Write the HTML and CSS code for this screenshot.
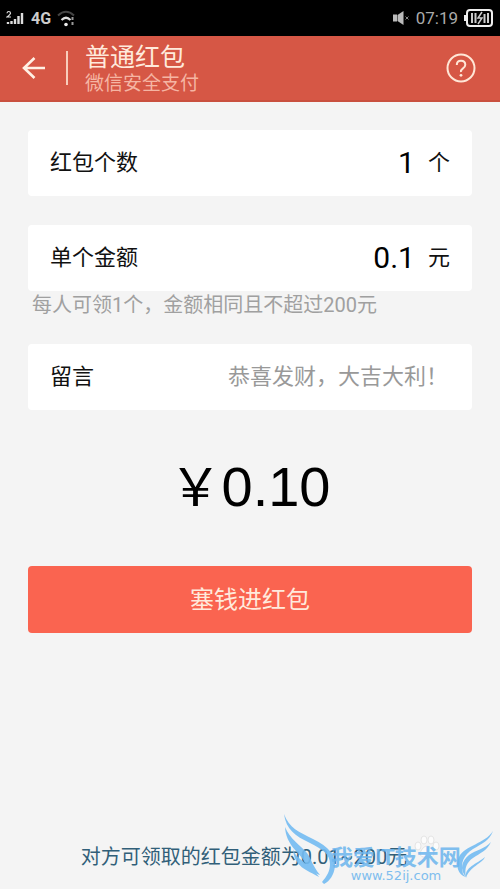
FILE: index.html
```html
<!DOCTYPE html>
<html lang="zh-CN">
<head>
<meta charset="utf-8">
<meta name="viewport" content="width=device-width, initial-scale=1">
<title>普通红包</title>
<link rel="stylesheet" href="styles.css">
</head>
<body>
<div class="status">
  <svg class="signal" viewBox="0 0 20 18" width="20" height="18" aria-hidden="true">
    <path d="M2 15v-2M5.500 15v-3M9 15v-5M12.500 15v-8M16 15V4" stroke="#ddd" stroke-width="2.400" fill="none"/>
    <path d="M1 4.200Q1.200 2.500 2.800 2.500T4.500 4.200Q4.400 5.400 1 8h4" stroke="#ddd" stroke-width="1.200" fill="none"/>
  </svg>
  <span class="net">4G</span>
  <svg class="wifi" viewBox="0 0 20 18" width="20" height="18" aria-hidden="true">
    <path d="M1 6.500Q9-1 17 6.500" stroke="#444" stroke-width="2" fill="none"/>
    <path d="M4.500 11Q9 6.500 13.500 11" stroke="#ddd" stroke-width="2.200" fill="none"/>
    <circle cx="9" cy="15.500" r="1.800" fill="#eee"/>
    <path d="M15.500 8v3M15.500 13v3" stroke="#999" stroke-width="2"/>
  </svg>
  <span class="grow"></span>
  <svg class="mute" viewBox="0 0 18 16" width="18" height="16" aria-hidden="true">
    <path d="M1 4.500h4v7H1zM5.500 5l6-4v14l-6-4z" fill="#bbb"/>
    <path d="M13.500 6.500l3 3M16.500 6.500l-3 3" stroke="#888"/>
  </svg>
  <time class="clock">07:19</time>
  <svg class="battery" viewBox="0 0 30 18" width="30" height="18" aria-hidden="true">
    <rect x="3" y="1" width="25" height="16" rx="3" fill="none" stroke="#eee" stroke-width="2"/>
    <path d="M1 6v6" stroke="#eee" stroke-width="2"/>
    <path d="M8 4v10M11.500 4v10M20.500 5v9M24 4v10" stroke="#ccc" stroke-width="2"/>
    <path d="M18 3l-4 6h4l-4 6" stroke="#ccc" stroke-width="1.500" fill="none"/>
  </svg>
</div>
<header class="bar">
  <button class="icon-btn" type="button" aria-label="返回">
    <svg viewBox="0 0 24 24" width="24" height="24"><path d="M23 12H2M12.500 2L2 12l10.500 10" fill="none" stroke="#fff0e4" stroke-width="2.600"/></svg>
  </button>
  <span class="divider"></span>
  <div class="titles">
    <h1>普通红包</h1>
    <p>微信安全支付</p>
  </div>
  <button class="icon-btn" type="button" aria-label="帮助">
    <svg viewBox="0 0 30 30" width="30" height="30"><circle cx="15" cy="15" r="13.500" fill="none" stroke="#ffe6d6" stroke-width="2"/><path d="M10.800 12Q10.800 7.800 15 7.800T19.300 11.800Q19.300 13.800 17 15.300T15 19" fill="none" stroke="#ffe6d6" stroke-width="2"/><circle cx="15" cy="22.300" r="1.400" fill="#ffe6d6"/></svg>
  </button>
</header>
<main class="page">
  <form class="form">
    <div class="row">
      <label for="count">红包个数</label>
      <input class="num" id="count" type="text" inputmode="numeric" value="1">
      <span class="unit">个</span>
    </div>
    <div class="row">
      <label for="money">单个金额</label>
      <input class="num" id="money" type="text" inputmode="decimal" value="0.1">
      <span class="unit">元</span>
    </div>
    <p class="hint">每人可领1个，金额相同且不超过200元</p>
    <div class="row">
      <label for="msg">留言</label>
      <input class="msg" id="msg" type="text" placeholder="恭喜发财，大吉大利！">
    </div>
    <p class="total"><span class="yen">￥</span>0.10</p>
    <button class="submit" type="submit">塞钱进红包</button>
  </form>
  <p class="note">对方可领取的红包金额为0.01~200元</p>
</main>
<div class="mark">
  <svg class="wings" viewBox="0 0 220 78" width="220" height="78" aria-hidden="true">
    <g fill="#74bcf2">
      <path d="M4 3C9 17 19 21 33 28C49 36 56 44 55 55C54 64 50 70 44 73L42 71C47 65 50 60 50 53C50 43 42 38 30 32C15 25 6 18 4 3Z"/>
      <path d="M5 16C10 28 20 34 27 42C32 49 32 54 40 64C32 62 27 56 24 50C19 41 6 34 5 16Z"/>
      <path d="M13 38C16 49 29 51 39 66C27 59 14 56 13 38Z"/>
      <path d="M213 20C209 30 203 32 193 38C184 44 180 51 183 63L186 66C178 64 175 54 179 46C185 34 205 33 213 20Z"/>
      <path d="M211 31C207 40 200 42 193 47C187 51 184 57 186 66C179 58 182 50 189 44C196 39 205 38 211 31Z"/>
      <path d="M205 46C202 53 190 55 186 67C184 56 197 53 205 46Z"/>
    </g>
  </svg>
  <svg class="paw" viewBox="0 0 26 24" width="26" height="24" aria-hidden="true">
    <g fill="#fff" stroke="#e2e2e2"><ellipse cx="4" cy="11" rx="3" ry="4"/><ellipse cx="10" cy="5" rx="3" ry="4"/><ellipse cx="17" cy="5" rx="3" ry="4"/><ellipse cx="22" cy="11" rx="3" ry="4"/><path d="M13 11q4 0 7 7q0 5-7 4q-7 1-7-4q3-7 7-7z"/></g>
  </svg>
  <div class="mark-text"><b>我爱IT技术网</b><span>www.52ij.com</span></div>
</div>
</body>
</html>
```
FILE: styles.css
```css
* { box-sizing: border-box; }
body {
  margin: 0;
  min-height: 100vh;
  display: flex;
  flex-direction: column;
  position: relative;
  background: #f4f4f4;
  color: #111;
  font-family: Roboto, "Noto Sans CJK SC", sans-serif;
}
h1, p { margin: 0; font-weight: 400; }
button, input { font: inherit; border: 0; padding: 0; background: none; color: inherit; }
svg { display: block; flex: none; }

.status {
  display: flex;
  align-items: center;
  height: 36px;
  padding: 0 6px;
  background: #000;
  color: #ccc;
}
.net { margin: 0 6px 0 5px; font-size: 16px; font-weight: 700; }
.grow { flex: 1; }
.clock { margin: 0 6px; font-size: 17px; color: #aaa; }

.bar {
  display: flex;
  align-items: center;
  height: 66px;
  padding: 0 24px 0 22px;
  background: #d65745;
  border-bottom: 2px solid #c9503f;
}
.icon-btn { cursor: pointer; }
.divider { width: 2px; height: 34px; margin: 0 17px 0 20px; background: #f8cdbb; }
.titles { flex: 1; padding-top: 3px; }
.titles h1 { font-size: 25px; line-height: 28px; color: #ffeadc; }
.titles p { font-size: 19px; line-height: 24px; color: #f5b5a3; }

.page { flex: 1; display: flex; flex-direction: column; padding: 28px 28px 20px; }
.form { display: flex; flex-direction: column; }
.row {
  display: flex;
  align-items: center;
  height: 66px;
  margin-bottom: 29px;
  background: #fff;
  padding: 0 22px;
  border-radius: 4px;
  font-size: 22px;
  line-height: 32px;
}
.row input { flex: 1; min-width: 0; text-align: right; outline: 0; }
.row .num { font-size: 30px; color: #000; }
.unit { margin-left: 13px; }
.row .msg { padding-right: 2px; }
.msg::placeholder { color: #999; opacity: 1; }
.hint { margin: -27px 0 26px; padding-left: 4px; font-size: 20px; line-height: 25px; color: #a0a0a0; }
.total {
  display: flex;
  justify-content: center;
  align-items: baseline;
  font-family: "Liberation Sans", sans-serif;
  font-size: 56px;
  line-height: 90px;
  color: #000;
}
.yen { font-family: "Noto Sans CJK SC", sans-serif; font-size: 52px; }
.submit {
  height: 67px;
  margin-top: 34px;
  padding-bottom: 4px;
  border-radius: 4px;
  background: #fa6450;
  color: #ffeadc;
  font-size: 24px;
  cursor: pointer;
}
.note { margin-top: auto; padding-right: 12px; text-align: center; font-size: 20px; line-height: 24px; color: #315f79; white-space: nowrap; }

.mark { position: absolute; right: 0; bottom: 0; width: 220px; height: 78px; pointer-events: none; }
.wings { position: absolute; left: 0; top: 0; opacity: 0.9; }
.paw { position: absolute; left: 134px; top: 24px; opacity: 0.8; }
.mark-text {
  position: absolute;
  left: 50px;
  top: 36px;
  width: 132px;
  display: flex;
  flex-direction: column;
  align-items: center;
  color: #6bb5ee;
  white-space: nowrap;
  opacity: 0.85;
}
.mark-text b { font-size: 22px; line-height: 22px; }
.mark-text span { font-family: "DejaVu Sans", sans-serif; font-size: 13px; line-height: 14px; }
```
